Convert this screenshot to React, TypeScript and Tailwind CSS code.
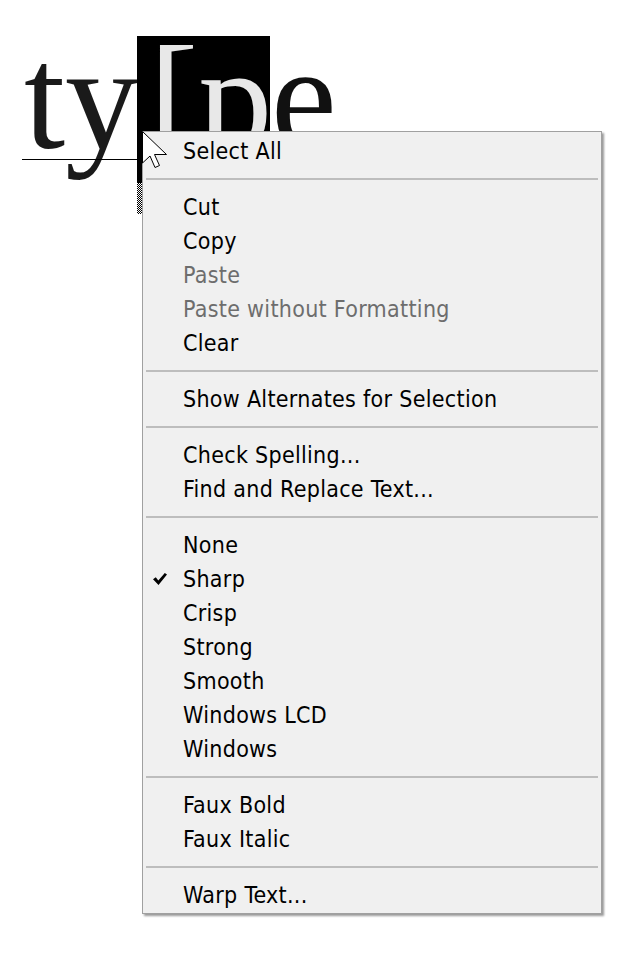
import { Fragment } from 'react';

type Item = { label: string; disabled?: boolean; checked?: boolean };

const GROUPS: Item[][] = [
    [{ label: 'Select All' }],
    [
        { label: 'Cut' },
        { label: 'Copy' },
        { label: 'Paste', disabled: true },
        { label: 'Paste without Formatting', disabled: true },
        { label: 'Clear' },
    ],
    [{ label: 'Show Alternates for Selection' }],
    [{ label: 'Check Spelling...' }, { label: 'Find and Replace Text...' }],
    [
        { label: 'None' },
        { label: 'Sharp', checked: true },
        { label: 'Crisp' },
        { label: 'Strong' },
        { label: 'Smooth' },
        { label: 'Windows LCD' },
        { label: 'Windows' },
    ],
    [{ label: 'Faux Bold' }, { label: 'Faux Italic' }],
    [{ label: 'Warp Text...' }],
];

const serif = { fontFamily: '"Liberation Serif", serif' };

function Check() {
    return (
        <svg width="14" height="12" viewBox="0 0 14 12">
            <path d="M0 6.2 L2.8 4.2 L5.3 7.6 L11.8 0 L14 1.6 L5.5 12 Z" fill="#000" />
        </svg>
    );
}

function Cursor() {
    return (
        <svg width="27" height="40" viewBox="0 0 27 40">
            <path
                d="M0.5 0.5 L0.5 32 L8 25 L13 36.5 L17.5 34.5 L12.5 23.5 L24.5 23.5 Z"
                fill="#fff"
                stroke="#000"
                strokeWidth="1"
            />
        </svg>
    );
}

function MenuItem({ item }: { item: Item }) {
    return (
        <div className="h-[34px] flex items-center relative pt-px">
            {item.checked && (
                <span className="absolute left-[10px] top-[11px]">
                    <Check />
                </span>
            )}
            <span className={`pl-[40px] ${item.disabled ? 'text-[#6d6d6d]' : 'text-[#000]'}`}>{item.label}</span>
        </div>
    );
}

export default function App() {
    return (
        <div className="relative w-[627px] h-[968px] bg-white overflow-hidden">
            {/* big type sample */}
            <div className="pt-[36px] pl-[22px] flex items-start">
                <div className="relative w-[115px] h-[180px]">
                    <span className="absolute left-[2px] top-[-12px] text-[148px] leading-none text-[#1a1a1a]" style={serif}>
                        ty
                    </span>
                    <div className="absolute left-0 top-[123px] w-[115px] h-px bg-black" />
                </div>
                <div className="relative w-[133px] h-[178px] bg-black overflow-hidden">
                    <div className="absolute left-0 bottom-0 w-[5px] h-[31px] bg-[repeating-conic-gradient(#000_0_25%,#fff_0_50%)] bg-[length:2px_2px]" />
                    <span className="absolute left-[12px] top-[-12px] text-[148px] leading-none text-[#e8e8e8]" style={serif}>
                        [p
                    </span>
                </div>
                <div className="relative w-[80px] h-[100px]">
                    <span className="absolute left-[1px] top-[-12px] text-[148px] leading-none text-[#111]" style={serif}>
                        e
                    </span>
                </div>
            </div>

            {/* context menu */}
            <div
                className="absolute left-[142px] top-[131px] w-[460px] bg-[#f0f0f0] border border-[#a0a0a0] shadow-[2px_2px_2px_rgba(0,0,0,0.4)] pt-[2px] pb-px text-[23px] leading-none tracking-[0.3px]"
                style={{ fontFamily: '"DejaVu Sans Condensed", "DejaVu Sans", sans-serif' }}
            >
                {GROUPS.map((group, gi) => (
                    <Fragment key={gi}>
                        {gi > 0 && (
                            <div className="h-[22px] flex items-center px-[3px]">
                                <div className="w-full h-[2px] bg-[#bdbdbd]" />
                            </div>
                        )}
                        {group.map((item) => (
                            <MenuItem key={item.label} item={item} />
                        ))}
                    </Fragment>
                ))}
            </div>

            <div className="absolute left-[142px] top-[131px]">
                <Cursor />
            </div>
        </div>
    );
}
